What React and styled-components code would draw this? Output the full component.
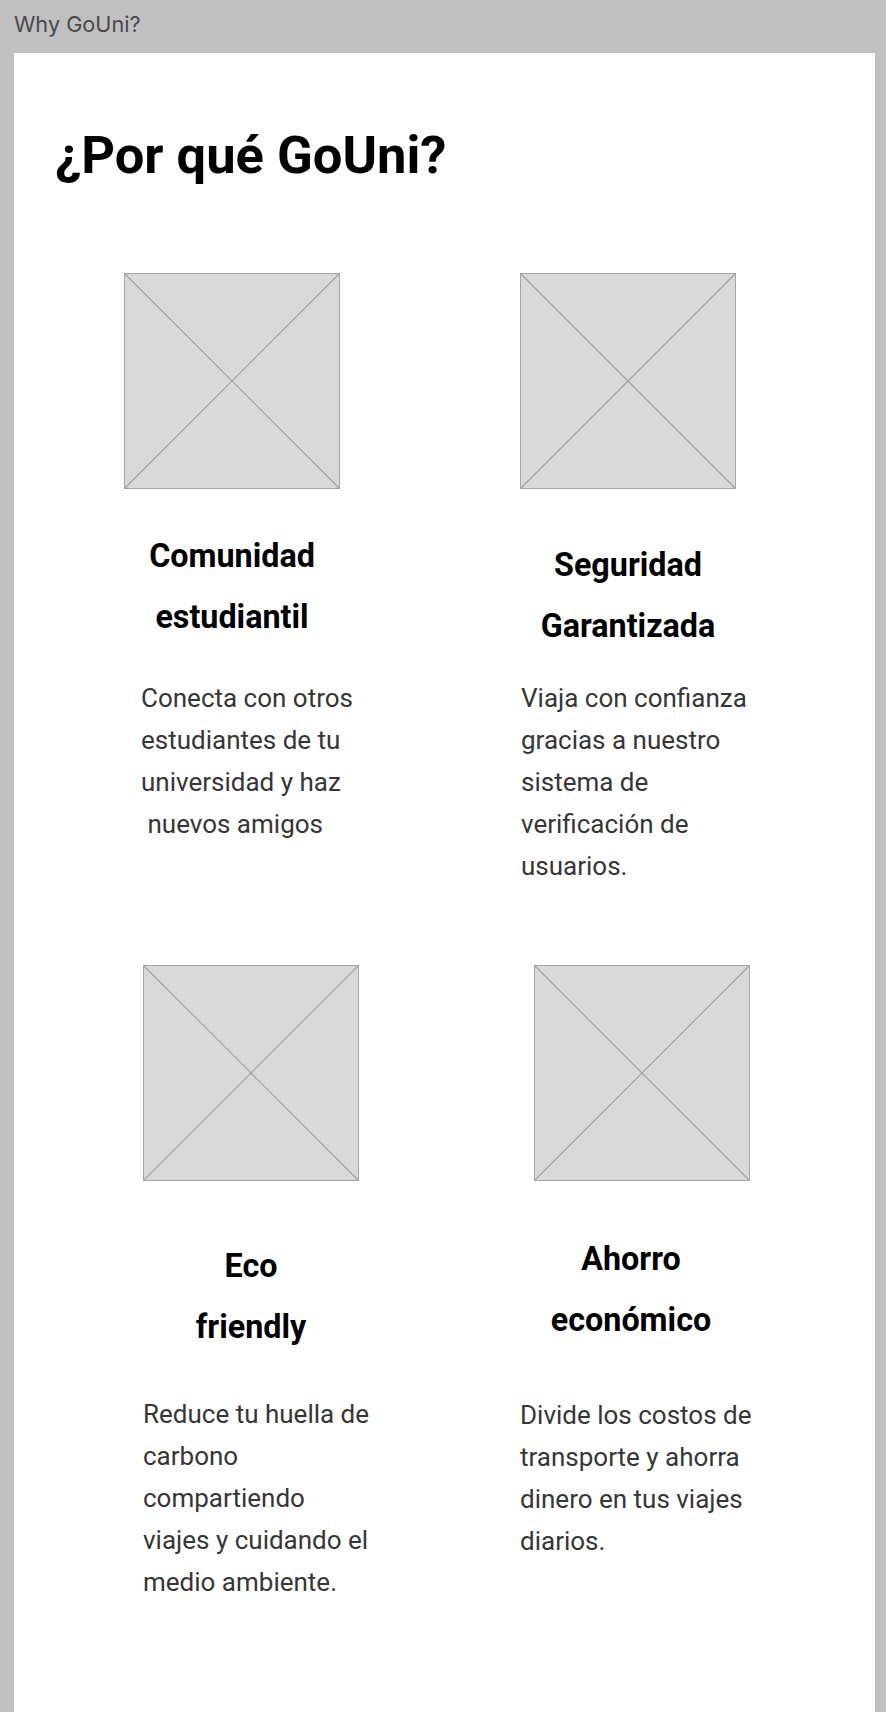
import React from "react";
import styled, { createGlobalStyle } from "styled-components";

const GlobalStyle = createGlobalStyle`
  body {
    margin: 0;
    background: #c0c0c0;
  }
`;

const Page = styled.div`
  padding: 0 11px 0 14px;
`;

const FrameLabel = styled.div`
  box-sizing: border-box;
  height: 53px;
  padding-top: 12px;
  font-family: Inter, "Liberation Sans", sans-serif;
  font-size: 21.7px;
  line-height: 25px;
  color: #4a4a4a;
`;

const Frame = styled.main`
  background: #fff;
  min-height: 1659px;
  padding-top: 71px;
  box-sizing: border-box;
  font-family: Roboto, "Liberation Sans", sans-serif;
`;

const Heading = styled.h1`
  margin: 0 0 0 41px;
  font-size: 52.5px;
  line-height: 62px;
  font-weight: 700;
  color: #000;
`;

const Grid = styled.section`
  margin-top: 87px;
  display: grid;
  grid-template-columns: 430px 431px;
  row-gap: 78px;
`;

const Card = styled.article`
  display: flex;
  flex-direction: column;
  align-items: flex-start;
`;

const Placeholder = styled.svg`
  display: block;
  width: 216px;
  height: 216px;
  margin-left: ${(p) => p.$x}px;
`;

const Title = styled.h3`
  width: 216px;
  margin: ${(p) => p.$top}px 0 0 ${(p) => p.$x}px;
  font-size: 32.3px;
  line-height: 61px;
  font-weight: 700;
  text-align: center;
  color: #000;
`;

const Body = styled.p`
  margin: ${(p) => p.$top}px 0 0 ${(p) => p.$x}px;
  font-size: 26px;
  line-height: 42px;
  font-weight: 400;
  color: #363636;
  white-space: nowrap;
`;

const ImageBox = ({ x }) => (
  <Placeholder $x={x} viewBox="0 0 216 216">
    <rect x="0.5" y="0.5" width="215" height="215" fill="#d9d9d9" stroke="#a6a6a6" />
    <line x1="0.5" y1="0.5" x2="215.5" y2="215.5" stroke="#a0a0a0" strokeWidth="1.1" />
    <line x1="215.5" y1="0.5" x2="0.5" y2="215.5" stroke="#a0a0a0" strokeWidth="1.1" />
  </Placeholder>
);

const features = [
  {
    title: ["Comunidad", "estudiantil"],
    lines: ["Conecta con otros", "estudiantes de tu", "universidad y haz", "\u00a0nuevos amigos"],
    img: 110, titleX: 110, titleTop: 37, bodyX: 127, bodyTop: 29,
  },
  {
    title: ["Seguridad", "Garantizada"],
    lines: ["Viaja con confianza", "gracias a nuestro", "sistema de", "verificación de", "usuarios."],
    img: 76, titleX: 76, titleTop: 46, bodyX: 77, bodyTop: 20,
  },
  {
    title: ["Eco", "friendly"],
    lines: ["Reduce tu huella de", "carbono", "compartiendo", "viajes y cuidando el", "medio ambiente."],
    img: 129, titleX: 129, titleTop: 55, bodyX: 129, bodyTop: 35,
  },
  {
    title: ["Ahorro", "económico"],
    lines: ["Divide los costos de", "transporte y ahorra", "dinero en tus viajes", "diarios."],
    img: 90, titleX: 79, titleTop: 48, bodyX: 76, bodyTop: 43,
  },
];

const Lines = ({ items }) =>
  items.map((line, i) => (
    <React.Fragment key={i}>
      {i > 0 && <br />}
      {line}
    </React.Fragment>
  ));

export default function App() {
  return (
    <Page>
      <GlobalStyle />
      <FrameLabel>Why GoUni?</FrameLabel>
      <Frame>
        <Heading>¿Por qué GoUni?</Heading>
        <Grid>
          {features.map((f) => (
            <Card key={f.title[0]}>
              <ImageBox x={f.img} />
              <Title $x={f.titleX} $top={f.titleTop}>
                <Lines items={f.title} />
              </Title>
              <Body $x={f.bodyX} $top={f.bodyTop}>
                <Lines items={f.lines} />
              </Body>
            </Card>
          ))}
        </Grid>
      </Frame>
    </Page>
  );
}
